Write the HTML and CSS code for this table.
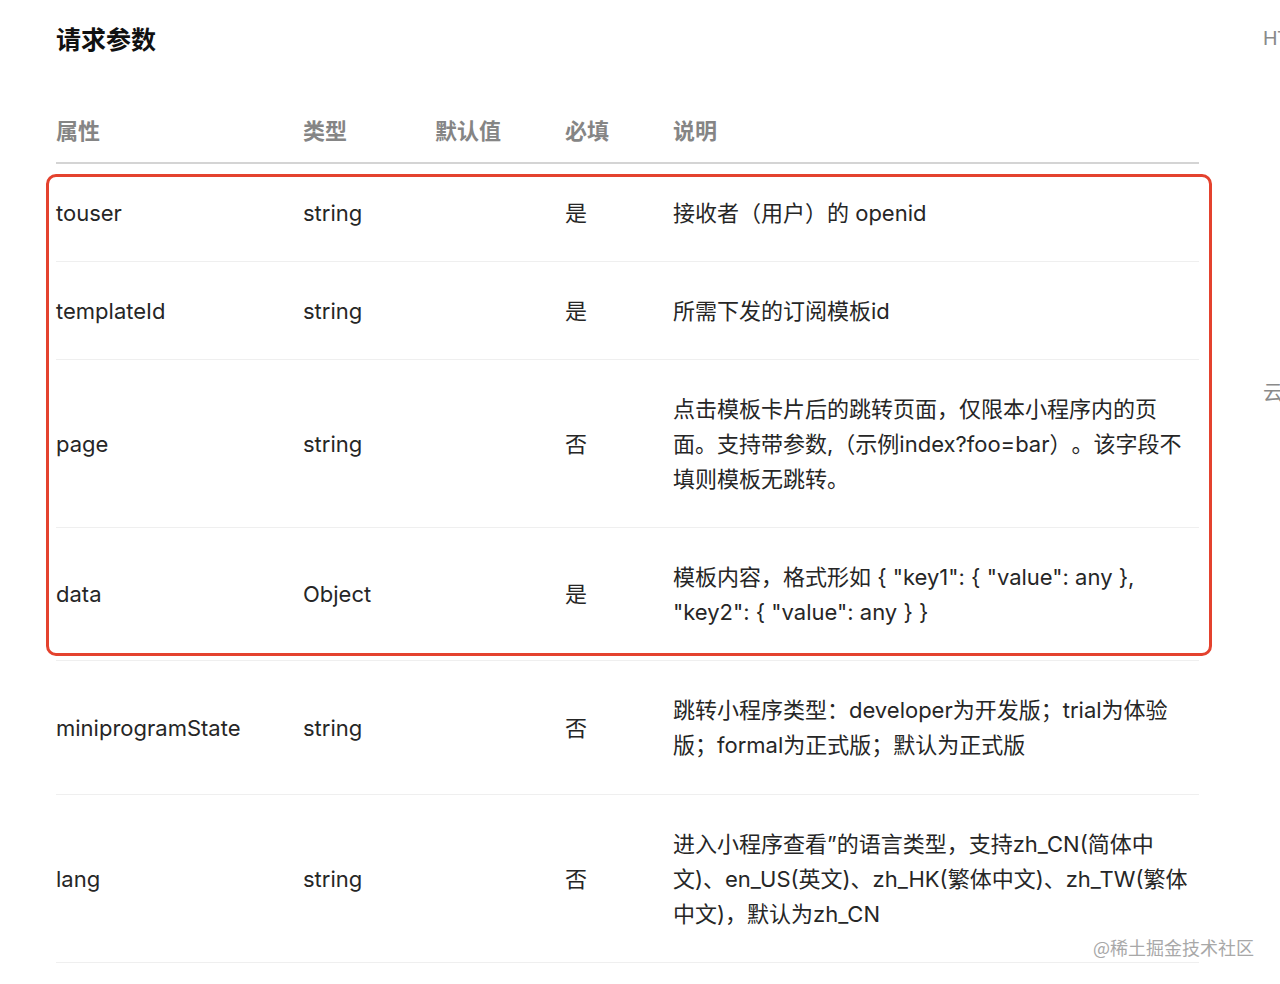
FILE: index.html
```html
<!DOCTYPE html>
<html lang="zh-CN">
<head>
<meta charset="utf-8">
<title>请求参数</title>
<link rel="stylesheet" href="styles.css">
</head>
<body>
<div class="page">
  <main class="main">
    <h2 class="title">请求参数</h2>
    <div class="table-wrap">
      <table class="params">
        <colgroup>
          <col class="c-name">
          <col class="c-type">
          <col class="c-def">
          <col class="c-req">
          <col class="c-desc">
        </colgroup>
        <thead>
          <tr><th>属性</th><th>类型</th><th>默认值</th><th>必填</th><th>说明</th></tr>
        </thead>
        <tbody>
          <tr><td>touser</td><td>string</td><td></td><td>是</td><td>接收者（用户）的 openid</td></tr>
          <tr><td>templateId</td><td>string</td><td></td><td>是</td><td>所需下发的订阅模板id</td></tr>
          <tr><td>page</td><td>string</td><td></td><td>否</td><td>点击模板卡片后的跳转页面，仅限本小程序内的页面。支持带参数,（示例index?foo=bar）。该字段不填则模板无跳转。</td></tr>
          <tr><td>data</td><td>Object</td><td></td><td>是</td><td>模板内容，格式形如 { "key1": { "value": any }, "key2": { "value": any } }</td></tr>
          <tr class="tall"><td>miniprogramState</td><td>string</td><td></td><td>否</td><td>跳转小程序类型：developer为开发版；trial为体验版；formal为正式版；默认为正式版</td></tr>
          <tr><td>lang</td><td>string</td><td></td><td>否</td><td>进入小程序查看”的语言类型，支持zh_CN(简体中文)、en_US(英文)、zh_HK(繁体中文)、zh_TW(繁体中文)，默认为zh_CN</td></tr>
        </tbody>
      </table>
      <div class="highlight"></div>
    </div>
  </main>
  <aside class="toc">
    <div class="toc-item first">HTTPS 调用</div>
    <div class="toc-item second">云调用</div>
  </aside>
</div>
<div class="watermark">@稀土掘金技术社区</div>
</body>
</html>
```

FILE: styles.css
```css
html, body {
  margin: 0;
  padding: 0;
  background: #fff;
  overflow: hidden;
}
body {
  font-family: "Inter", "Liberation Sans", "Noto Sans CJK SC", sans-serif;
  color: #262626;
  width: 1280px;
  height: 984px;
  position: relative;
  text-spacing-trim: space-all;
}
.page {
  display: flex;
  width: 1280px;
}
.main {
  width: 1206px;
  flex: none;
  padding-left: 56px;
  padding-top: 20px;
}
.title {
  margin: 0;
  font-size: 25px;
  line-height: 36px;
  font-weight: 700;
  color: #111;
  font-family: "Noto Sans CJK SC", sans-serif;
}
.table-wrap {
  position: relative;
  margin-top: 42px;
  width: 1143px;
}
.params {
  width: 1143px;
  border-collapse: collapse;
  table-layout: fixed;
  font-size: 22px;
  line-height: 35px;
}
.c-name { width: 247px; }
.c-type { width: 132px; }
.c-def { width: 130px; }
.c-req { width: 108px; }
.c-desc { width: 526px; }
.params th {
  text-align: left;
  font-weight: 600;
  color: #858585;
  padding: 14px 0 15px;
  border-bottom: 2px solid #d4d4d4;
  font-family: "Noto Sans CJK SC", sans-serif;
}
.params td {
  padding: 31.5px 0 30.5px;
  vertical-align: middle;
  border-bottom: 1px solid #efefef;
}
.params tr.tall td {
  padding-top: 32px;
  padding-bottom: 31px;
}
.highlight {
  position: absolute;
  left: -10px;
  top: 76px;
  width: 1166px;
  height: 482px;
  box-sizing: border-box;
  border: 3px solid #e4422e;
  border-radius: 10px;
  pointer-events: none;
}
.toc {
  flex: none;
  width: 74px;
  overflow: hidden;
  white-space: nowrap;
  font-size: 20px;
  line-height: 30px;
  color: #8a8a8a;
  font-family: "Liberation Sans", "Noto Sans CJK SC", sans-serif;
  padding-left: 57px;
  margin-left: -56px;
}
.toc-item.first { margin-top: 23px; }
.toc-item.second { margin-top: 325px; }
.watermark {
  position: absolute;
  left: 1093px;
  top: 934px;
  font-size: 18px;
  line-height: 26px;
  color: #a8a8a8;
  font-family: "Noto Sans CJK SC", sans-serif;
  white-space: nowrap;
}
```
